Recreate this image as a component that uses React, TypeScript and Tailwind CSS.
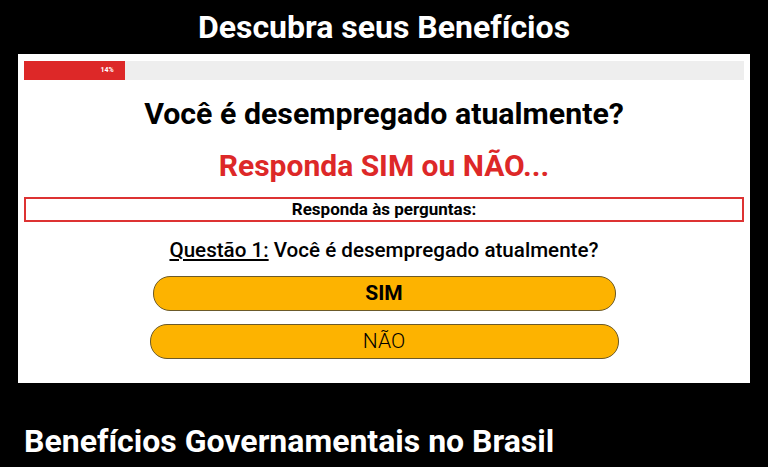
export default function App() {
  return (
    <div
      className="w-[768px] h-[467px] overflow-hidden bg-black"
      style={{ fontFamily: "Roboto, 'Liberation Sans', sans-serif" }}
    >
      <h1 className="h-[54px] flex items-center justify-center text-white font-bold text-[32px]">
        Descubra seus Benefícios
      </h1>

      <div className="mx-[18px] bg-white px-[6px] pt-[7px] h-[329px]">
        {/* progress */}
        <div className="h-[19px] bg-[#eeeeee] flex">
          <div className="w-[14%] bg-[#dd2828] flex items-center justify-end pr-[11px]">
            <span className="text-white text-[7px] font-bold">14%</span>
          </div>
        </div>

        <h2 className="mt-[16px] text-center font-bold text-[30.3px] leading-[36px] text-black">
          Você é desempregado atualmente?
        </h2>
        <h3 className="mt-[16px] text-center font-bold text-[30px] leading-[36px] text-[#dd2828]">
          Responda SIM ou NÃO...
        </h3>

        <div className="mt-[13px] h-[25px] border-2 border-[#dd3333] flex items-center justify-center font-bold text-[17px] text-black">
          Responda às perguntas:
        </div>

        <p className="mt-[15px] text-center text-[20.6px] leading-[26px] font-medium text-black">
          <span className="underline">Questão 1:</span> Você é desempregado atualmente?
        </p>

        <div className="mt-[13px] flex flex-col items-center gap-[13px]">
          <button className="w-[463px] h-[35px] rounded-[17px] bg-[#fdb300] border border-[#6b5a2a] font-bold text-[21px] text-black">
            SIM
          </button>
          <button className="w-[469px] h-[35px] rounded-[17px] bg-[#fdb300] border border-[#6b5a2a] font-light text-[21px] text-black">
            NÃO
          </button>
        </div>
      </div>

      <h2 className="mt-[40px] pl-[24px] text-white font-bold text-[32px] leading-[36px]">
        Benefícios Governamentais no Brasil
      </h2>
    </div>
  );
}
